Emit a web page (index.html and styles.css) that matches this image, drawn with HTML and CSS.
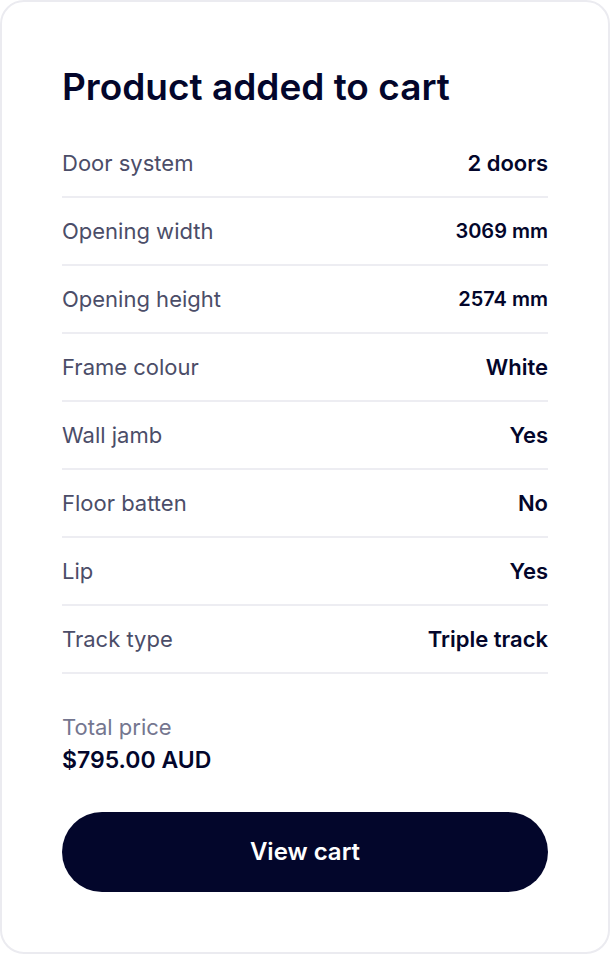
FILE: index.html
```html
<!DOCTYPE html>
<html lang="en">
<head>
    <meta charset="UTF-8">
    <meta name="viewport" content="width=device-width, initial-scale=1.0">
    <title>Product added to cart</title>
    <link rel="stylesheet" href="styles.css">
</head>
<body>
    <main class="cart-card">
        <h1>Product added to cart</h1>

        <table class="product-details">
            <tbody>
                <tr>
                    <th scope="row">Door system</th>
                    <td>2 doors</td>
                </tr>
                <tr>
                    <th scope="row">Opening width</th>
                    <td class="measurement">3069 mm</td>
                </tr>
                <tr>
                    <th scope="row">Opening height</th>
                    <td class="measurement">2574 mm</td>
                </tr>
                <tr>
                    <th scope="row">Frame colour</th>
                    <td>White</td>
                </tr>
                <tr>
                    <th scope="row">Wall jamb</th>
                    <td>Yes</td>
                </tr>
                <tr>
                    <th scope="row">Floor batten</th>
                    <td>No</td>
                </tr>
                <tr>
                    <th scope="row">Lip</th>
                    <td>Yes</td>
                </tr>
                <tr>
                    <th scope="row">Track type</th>
                    <td>Triple track</td>
                </tr>
            </tbody>
        </table>

        <div class="total">
            <p class="total-label">Total price</p>
            <p class="total-price">$795.00 AUD</p>
        </div>

        <button type="button" class="view-cart-button">View cart</button>
    </main>
</body>
</html>
```

FILE: styles.css
```css
* {
    box-sizing: border-box;
}

body {
    margin: 0;
    background-color: white;
    color: #03062b;
    font-family: 'Inter', sans-serif;
}

.cart-card {
    min-height: 100vh;
    padding: 60px 60px 58px;
    border: 2px solid #ebebf0;
    border-radius: 24px;
    background-color: white;
}

h1 {
    margin: 0 0 18px;
    font-size: 37px;
    line-height: 50px;
    font-weight: 600;
}

/* One row per product option */
.product-details {
    width: 100%;
    border-collapse: separate;
    border-spacing: 0;
    font-size: 22px;
    line-height: 26px;
}

.product-details th,
.product-details td {
    height: 68px;
    padding: 0;
    border-bottom: 2px solid #ededf2;
}

.product-details th {
    color: #4b4d68;
    font-weight: 400;
    text-align: left;
}

.product-details td {
    font-weight: 600;
    text-align: right;
}

.product-details .measurement {
    font-size: 20px;
}

.total {
    margin: 36px 0;
}

.total p {
    margin: 0;
}

.total-label {
    color: #74768f;
    font-size: 22px;
    line-height: 34px;
}

.total-price {
    font-size: 23px;
    line-height: 32px;
    font-weight: 600;
}

.view-cart-button {
    width: 100%;
    height: 80px;
    padding: 0 0 2px;
    border: none;
    border-radius: 40px;
    background-color: #03062b;
    color: white;
    font-family: inherit;
    font-size: 24px;
    font-weight: 600;
    cursor: pointer;
}

.view-cart-button:hover {
    background-color: #1b1e45;
}
```
